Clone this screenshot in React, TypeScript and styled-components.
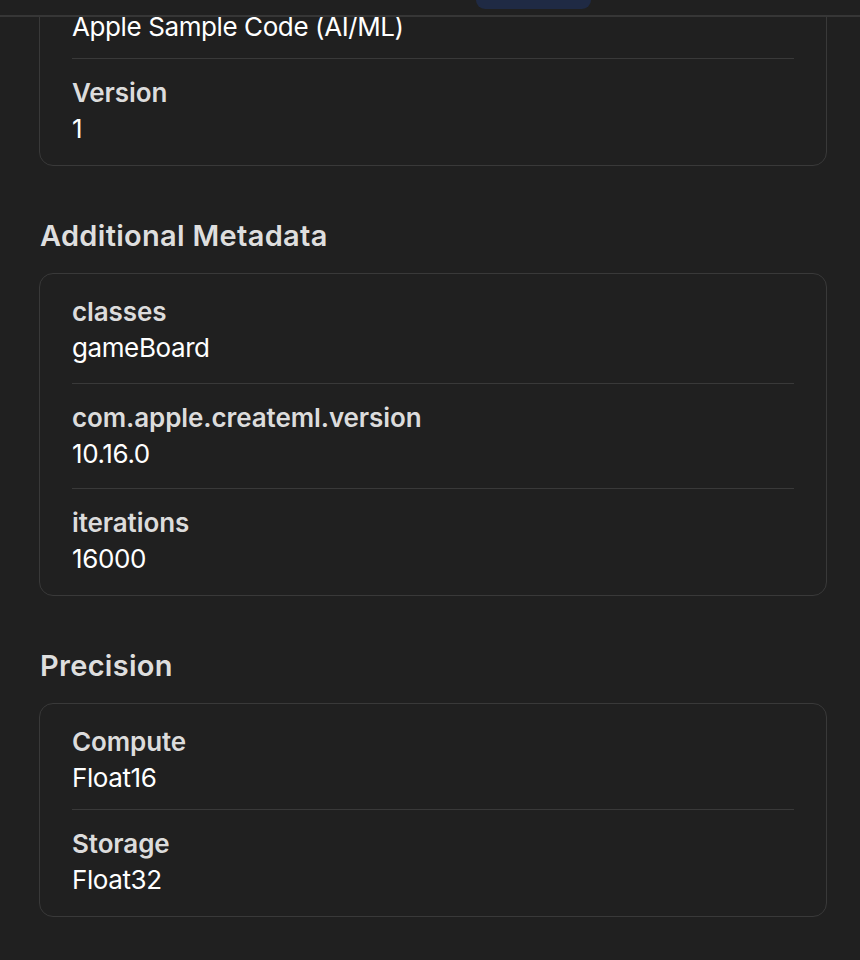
import React, { useLayoutEffect, useRef } from 'react';
import styled, { createGlobalStyle } from 'styled-components';

const GlobalStyle = createGlobalStyle`
  html, body {
    margin: 0;
    padding: 0;
    background: #202020;
  }
  body {
    font-family: Inter, "Noto Sans", "Liberation Sans", sans-serif;
    -webkit-font-smoothing: antialiased;
  }
`;

// the view is scrolled, so the first section sits partly under the top bar
const sections = [
  {
    title: 'Metadata',
    gap: 0,
    rows: [
      { label: 'Author', value: 'Apple Sample Code (AI/ML)' },
      { label: 'Version', value: '1' },
    ],
  },
  {
    title: 'Additional Metadata',
    gap: 3.5,
    rows: [
      { label: 'classes', value: 'gameBoard' },
      { label: 'com.apple.createml.version', value: '10.16.0' },
      { label: 'iterations', value: '16000' },
    ],
  },
  {
    title: 'Precision',
    gap: 0,
    rows: [
      { label: 'Compute', value: 'Float16' },
      { label: 'Storage', value: 'Float32' },
    ],
  },
];

const App = () => {
  const scroller = useRef<HTMLDivElement>(null);

  useLayoutEffect(() => {
    if (scroller.current) scroller.current.scrollTop = 143;
  }, []);

  return (
    <>
      <GlobalStyle />
      <Scroller ref={scroller}>
        <TopBar>
          <ActiveTab />
        </TopBar>
        <Content>
          {sections.map(section => (
            <Section key={section.title}>
              <SectionTitle>{section.title}</SectionTitle>
              <Card $gap={section.gap}>
                {section.rows.map(row => (
                  <Row key={row.label}>
                    <Label>{row.label}</Label>
                    <Value>{row.value}</Value>
                  </Row>
                ))}
              </Card>
            </Section>
          ))}
        </Content>
      </Scroller>
    </>
  );
};

const Scroller = styled.div`
  height: 100vh;
  overflow-y: auto;
  scrollbar-width: none;
  background: #202020;

  &::-webkit-scrollbar {
    display: none;
  }
`;

const TopBar = styled.div`
  position: sticky;
  top: 0;
  z-index: 2;
  height: 15px;
  background: #202020;
  border-bottom: 2px solid #363636;
  display: flex;
  padding-left: 476px;
`;

const ActiveTab = styled.div`
  width: 115px;
  height: 9px;
  background: #1f2a44;
  border-radius: 0 0 9px 9px;
`;

const Content = styled.div`
  display: flex;
  flex-direction: column;
  gap: 53px;
  padding: 24px 33px 60px 39px;
`;

const Section = styled.section`
  display: flex;
  flex-direction: column;
  gap: 20px;
`;

const SectionTitle = styled.h2`
  margin: 0 0 0 1px;
  font-size: 29px;
  line-height: 34px;
  font-weight: 600;
  color: #dedede;
  letter-spacing: 0.3px;
`;

const Row = styled.div`
  display: flex;
  flex-direction: column;
  padding: 16px 0 13px;
`;

const Card = styled.div<{ $gap: number }>`
  border: 1.5px solid #393939;
  border-radius: 14px;
  padding: 4px 32px 5px;

  ${Row} + ${Row} {
    border-top: 1.5px solid #393939;
    margin-top: ${({ $gap }) => $gap}px;
  }
`;

const Label = styled.div`
  font-size: 26px;
  line-height: 36px;
  font-weight: 600;
  color: #dcdcdc;
  letter-spacing: -0.1px;
`;

const Value = styled.div`
  font-size: 26px;
  line-height: 36px;
  font-weight: 400;
  color: #ffffff;
  letter-spacing: -0.4px;
`;

export default App;
